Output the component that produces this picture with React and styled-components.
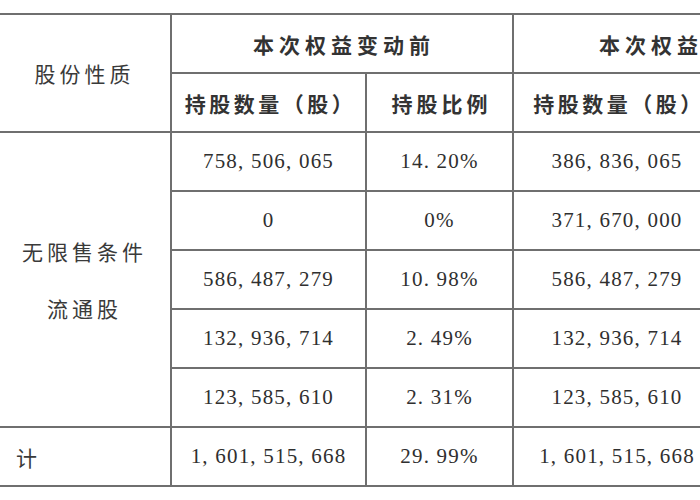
import React from "react";
import styled, { createGlobalStyle } from "styled-components";

const Global = createGlobalStyle`
  html, body { margin: 0; padding: 0; background: #fff; overflow: hidden; }
  body { width: 700px; height: 500px; }
`;

const Page = styled.div`
  padding-top: 13px;
  margin-left: -6px;
  width: 1100px;
`;

const Table = styled.table`
  border-collapse: collapse;
  table-layout: fixed;
  width: 1060px;
  color: #333;
`;

const Cell = styled.td`
  border: 2px solid #6f6f6f;
  height: 57px;
  padding: 0;
  text-align: ${(p) => p.$align || "center"};
  vertical-align: middle;
  white-space: nowrap;
  ${(p) => (p.$noLeft ? "border-left: none;" : "")}
`;

const HeadCell = styled(Cell).attrs({ as: "th" })`
  font-family: "Noto Sans CJK SC", "Noto Sans", sans-serif;
  font-weight: 700;
  font-size: 21px;
  letter-spacing: ${(p) => p.$ls || "4px"};
  color: #333;
  padding-left: 4px;
`;

const LabelCell = styled(Cell)`
  font-family: "Noto Sans CJK SC", "Noto Sans", sans-serif;
  font-size: 21px;
  letter-spacing: 4px;
  color: #3a3a3a;
  font-weight: 400;
  padding-left: ${(p) => p.$pad || "5px"};
`;

const StackText = styled.div`
  line-height: 57px;
`;

const NumCell = styled(Cell)`
  font-family: "Liberation Serif", "Times New Roman", serif;
  font-size: 21px;
  letter-spacing: 1.2px;
  color: #2f2f2f;
`;

const rows = [
  ["758, 506, 065", "14. 20%", "386, 836, 065", "7. 24%"],
  ["0", "0%", "371, 670, 000", "6. 96%"],
  ["586, 487, 279", "10. 98%", "586, 487, 279", "10. 98%"],
  ["132, 936, 714", "2. 49%", "132, 936, 714", "2. 49%"],
  ["123, 585, 610", "2. 31%", "123, 585, 610", "2. 31%"],
];

export default function App() {
  return (
    <>
      <Global />
      <Page>
        <Table>
          <colgroup>
            <col style={{ width: 177 }} />
            <col style={{ width: 195 }} />
            <col style={{ width: 147 }} />
            <col style={{ width: 208 }} />
            <col style={{ width: 142 }} />
            <col style={{ width: 191 }} />
          </colgroup>
          <thead>
            <tr>
              <LabelCell as="th" rowSpan={2} $noLeft>
                股份性质
              </LabelCell>
              <HeadCell colSpan={2} $ls="5px">本次权益变动前</HeadCell>
              <HeadCell colSpan={2} $ls="5px">本次权益变动后</HeadCell>
              <HeadCell>备注</HeadCell>
            </tr>
            <tr>
              <HeadCell $ls="3.5px">持股数量（股）</HeadCell>
              <HeadCell>持股比例</HeadCell>
              <HeadCell $ls="3.5px">持股数量（股）</HeadCell>
              <HeadCell>持股比例</HeadCell>
              <HeadCell />
            </tr>
          </thead>
          <tbody>
            {rows.map((r, i) => (
              <tr key={i}>
                {i === 0 && (
                  <LabelCell rowSpan={5} $noLeft>
                    <StackText>
                      无限售条件
                      <br />
                      流通股
                    </StackText>
                  </LabelCell>
                )}
                <NumCell>{r[0]}</NumCell>
                <NumCell>{r[1]}</NumCell>
                <NumCell>{r[2]}</NumCell>
                <NumCell>{r[3]}</NumCell>
                <NumCell />
              </tr>
            ))}
            <tr>
              <LabelCell $noLeft $align="left" $pad="22px">
                计
              </LabelCell>
              <NumCell>1, 601, 515, 668</NumCell>
              <NumCell>29. 99%</NumCell>
              <NumCell>1, 601, 515, 668</NumCell>
              <NumCell>29. 99%</NumCell>
              <NumCell />
            </tr>
          </tbody>
        </Table>
      </Page>
    </>
  );
}
